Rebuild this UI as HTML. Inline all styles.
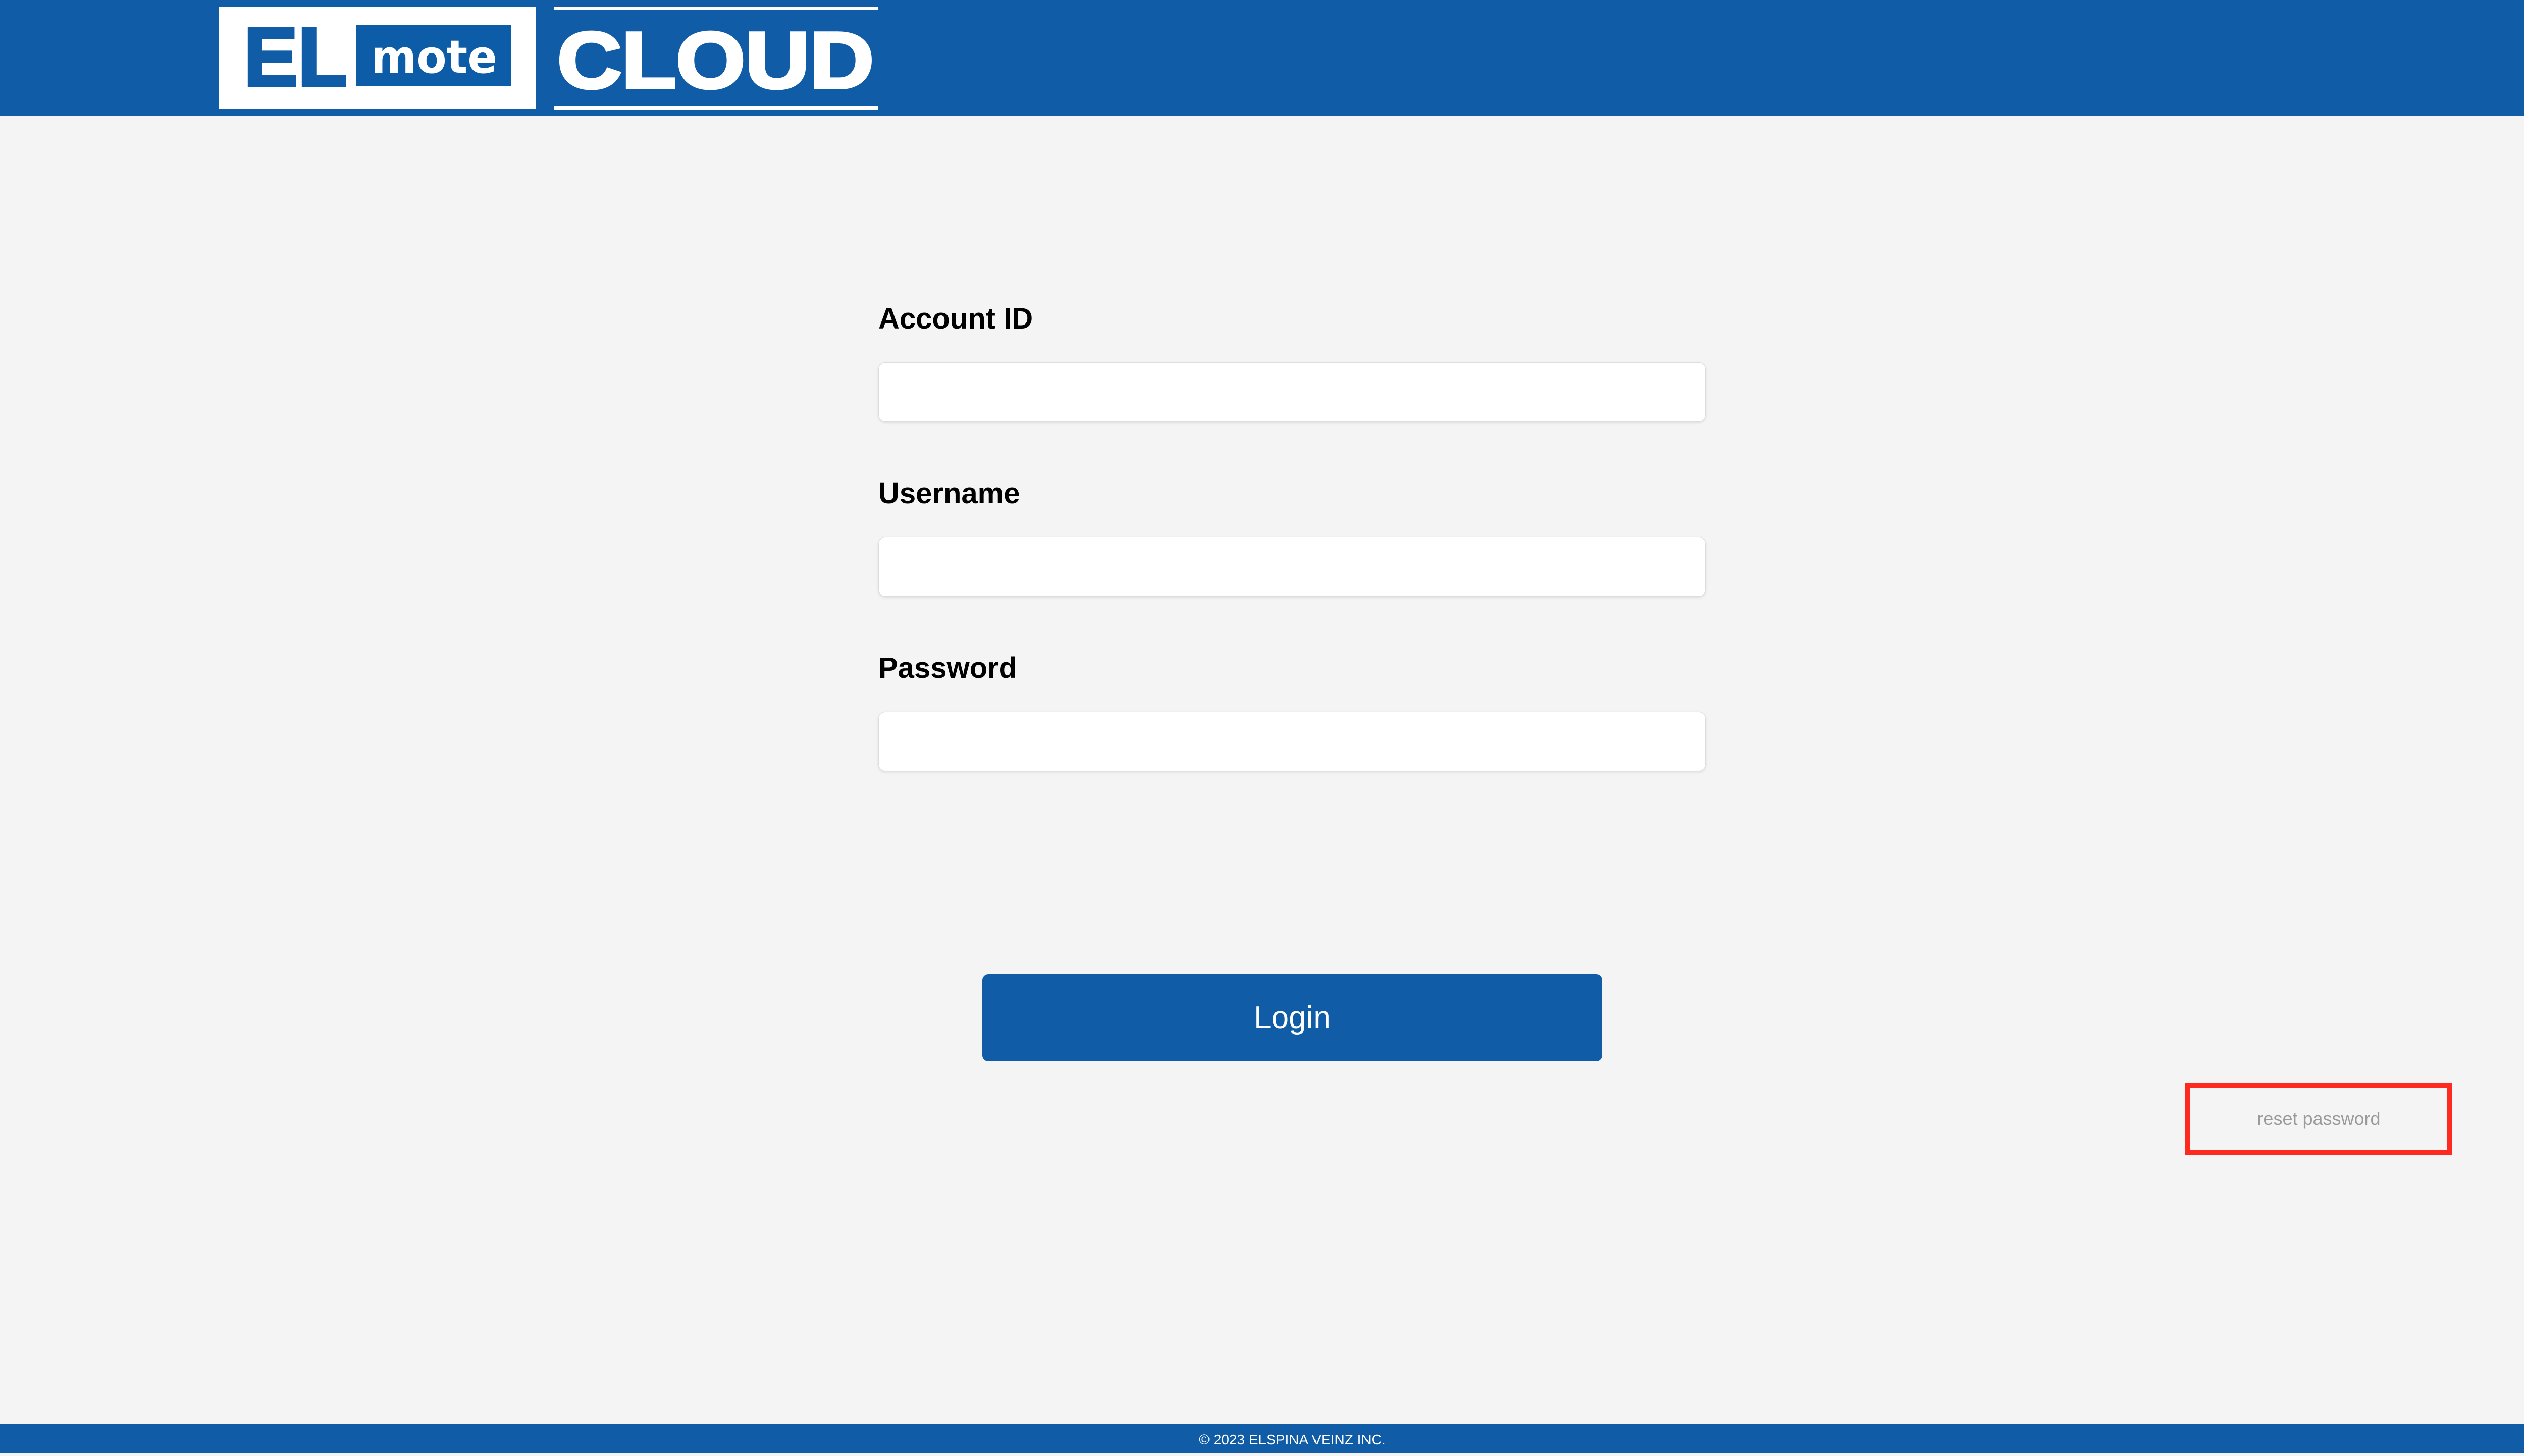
<!DOCTYPE html>
<html><head><meta charset="utf-8"><style>
html,body{margin:0;padding:0}
body{width:5120px;height:2880px;position:relative;background:#f4f4f4;font-family:"Liberation Sans",sans-serif;overflow:hidden}
.hdr{position:absolute;left:0;top:0;width:5120px;height:229px;background:#105ca6}
.abs{position:absolute}
.lbl{position:absolute;left:1740px;font-weight:bold;font-size:58px;color:#000}
.inp{position:absolute;left:1740px;width:1637px;height:116px;background:#fff;border:1px solid #ddd;border-radius:14px;box-shadow:0 2px 6px rgba(0,0,0,0.1)}
</style></head><body>
<div class="hdr"></div>
<svg class="abs" style="left:0;top:0" width="1800" height="229">
<rect x="434" y="13" width="627" height="203" fill="#fff"/>
<text x="483" y="170" font-family="Liberation Sans" font-weight="bold" font-size="165" fill="#105ca6" stroke="#105ca6" stroke-width="6" textLength="205" lengthAdjust="spacingAndGlyphs">EL</text>
<rect x="705" y="49" width="307" height="121" fill="#0c5ca8"/>
<text x="735" y="144" font-family="DejaVu Sans" font-weight="bold" font-size="90" fill="#fff" textLength="250" lengthAdjust="spacingAndGlyphs">mote</text>
<rect x="1097" y="13" width="642" height="7" fill="#fff"/>
<rect x="1097" y="210" width="642" height="7" fill="#fff"/>
<text x="1104" y="174" font-family="Liberation Sans" font-weight="bold" font-size="158" fill="#fff" stroke="#fff" stroke-width="6" textLength="627" lengthAdjust="spacingAndGlyphs">CLOUD</text>
</svg>
<div class="lbl" style="top:598px">Account ID</div>
<div class="inp" style="top:718px"></div>
<div class="lbl" style="top:944px">Username</div>
<div class="inp" style="top:1064px"></div>
<div class="lbl" style="top:1290px">Password</div>
<div class="inp" style="top:1410px"></div>
<div class="abs" style="left:1946px;top:1930px;width:1228px;height:173px;background:#105ca6;border-radius:12px;color:#fff;font-size:62px;line-height:173px;text-align:center">Login</div>
<div class="abs" style="left:4329px;top:2145px;width:509px;height:124px;border:10px solid #ff2a1f;color:#9a9a9a;font-size:36px;line-height:124px;text-align:center">reset password</div>
<div class="abs" style="left:0;top:2821px;width:5120px;height:59px;background:#105ca6;color:#fff;font-size:28px;line-height:64px;text-align:center">© 2023 ELSPINA VEINZ INC.</div>
</body></html>
